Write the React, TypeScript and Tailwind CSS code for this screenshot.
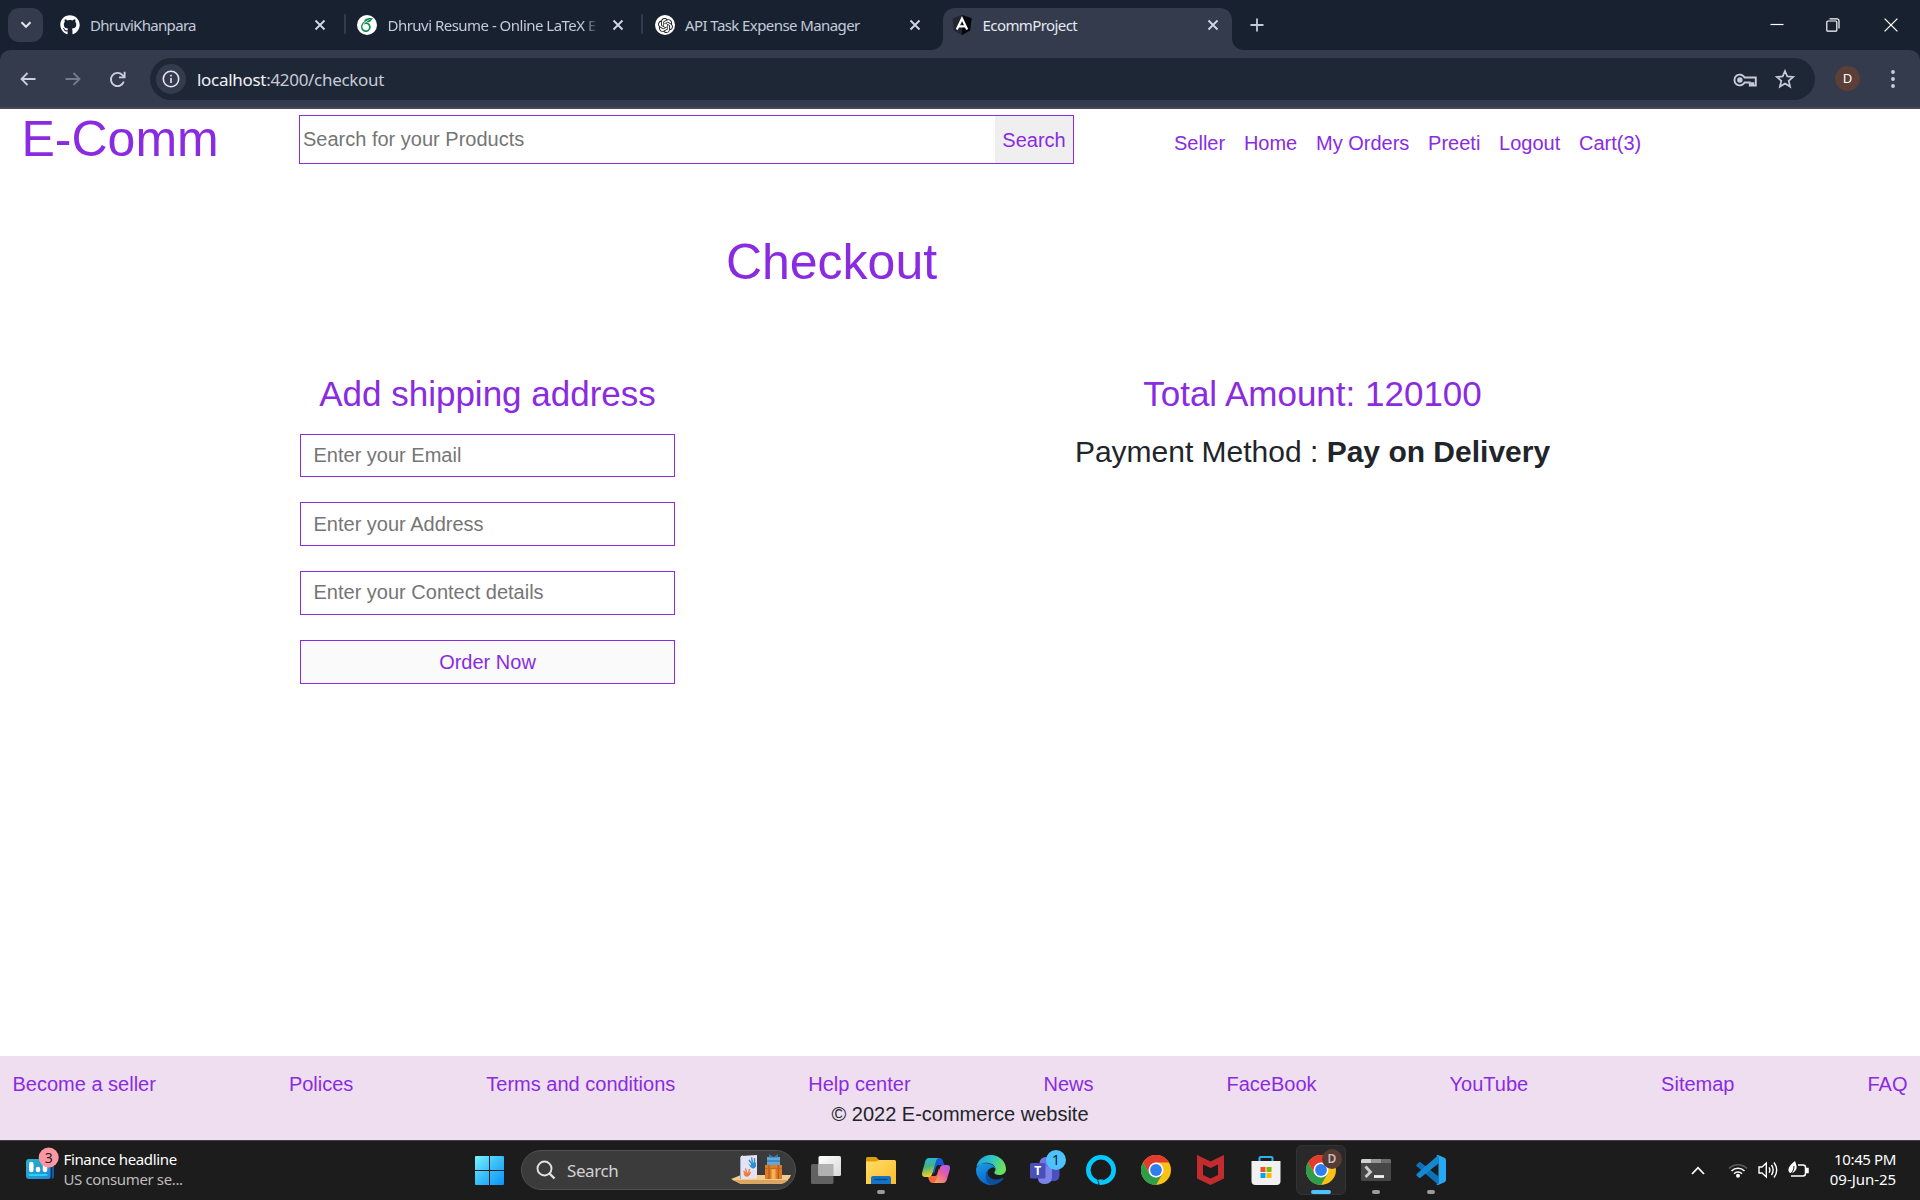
import React from "react";
import { FaGithub } from "react-icons/fa";
import { SiOpenai, SiOverleaf } from "react-icons/si";

function Close() {
  return (
    <svg width="12" height="12" viewBox="0 0 12 12" stroke="#d3d8e6" strokeWidth="1.8" fill="none">
      <path d="M1.5 1.5l9 9M10.5 1.5l-9 9" />
    </svg>
  );
}

function Tab({
  icon,
  title,
  active = false,
  separator = false,
  spacing = "",
  fade = false,
}: {
  icon: React.ReactNode;
  title: string;
  active?: boolean;
  separator?: boolean;
  spacing?: string;
  fade?: boolean;
}) {
  return (
    <div className="relative flex h-[50px] w-[297.5px] shrink-0 pt-2">
      {active && (
        <svg className="absolute top-0 -left-[12px]" width="320" height="50" viewBox="0 0 320 50">
          <path d="M0 50h2c7 0 12-5 12-12V20c0-7 5-12 12-12h265c7 0 12 5 12 12v18c0 7 5 12 12 12h2z" fill="#333b4c" />
        </svg>
      )}
      <div className="relative flex h-[34px] w-[291px] items-center pl-3">
        <span className="flex h-5 w-5 shrink-0 items-center justify-center">{icon}</span>
        <span
          className={
            "ml-[10px] w-[210px] shrink-0 whitespace-nowrap text-[15px] leading-[22px] " +
            spacing +
            (active ? " text-[#e6e9f2]" : " text-[#c3cadb]") +
            (fade ? " [mask-image:linear-gradient(to_right,black_93%,transparent_100%)]" : "")
          }
        >
          {title}
        </span>
        <span className="ml-[14px]">
          <Close />
        </span>
      </div>
      {separator && <span className="absolute right-0 top-[14px] h-5 w-[2px] rounded bg-[#333b4c]" />}
    </div>
  );
}

function BrowserChrome() {
  return (
    <div className="h-[109px] bg-[#182130] font-['Noto_Sans',sans-serif]">
      <div className="flex h-[50px] items-start">
        <div className="ml-2 mt-2 flex h-[34px] w-[35px] items-center justify-center rounded-[11px] bg-[#333b4c]">
          <svg width="12" height="8" viewBox="0 0 12 8" fill="none" stroke="#e3e6ef" strokeWidth="2">
            <path d="M1.5 1.2L6 5.8l4.5-4.6" />
          </svg>
        </div>
        <div className="ml-[5px] flex">
          <Tab separator icon={<FaGithub size={20} color="#fff" />} title="DhruviKhanpara" spacing="tracking-[-0.68px]" />
          <Tab
            separator
            fade
            icon={
              <span className="relative -left-px flex h-5 w-5 items-center justify-center rounded-full bg-white">
                <SiOverleaf size={14} color="#138a4c" />
              </span>
            }
            title="Dhruvi Resume - Online LaTeX E"
            spacing="tracking-[-0.52px]"
          />
          <Tab
            icon={
              <span className="flex h-5 w-5 items-center justify-center rounded-full bg-white">
                <SiOpenai size={15} color="#222" />
              </span>
            }
            title="API Task Expense Manager"
            spacing="tracking-[-0.58px]"
          />
          <Tab
            active
            icon={
              <svg className="relative -left-px" width="20" height="20" viewBox="0 0 20 20">
                <path d="M10 0l9.5 3.3-1.4 12.2L10 20l-8.1-4.5L.5 3.3z" fill="#22262f" />
                <path d="M10 0l9.5 3.3-1.4 12.2L10 20z" fill="#05070c" />
                <path d="M4.8 14.5L10 3.6l5.2 10.900M6.800 11.300h6.400" fill="none" stroke="#fff" strokeWidth="2.200" />
              </svg>
            }
            title="EcommProject"
            spacing="tracking-[-0.58px]"
          />
        </div>
        <svg className="ml-[12px] mt-[18px]" width="14" height="14" viewBox="0 0 14 14" stroke="#c3cadb" strokeWidth="1.8">
          <path d="M7 .5v13M.5 7h13" />
        </svg>
        <div className="ml-auto flex h-[50px] items-center pr-[22px]">
          <svg width="14" height="14" viewBox="0 0 14 14" stroke="#fff" strokeWidth="1.2">
            <path d="M.5 6.5h13" />
          </svg>
          <svg className="ml-[42px]" width="14" height="14" viewBox="0 0 14 14" stroke="#fff" strokeWidth="1.2" fill="none">
            <rect x=".8" y="3" width="10" height="10.2" rx="1" />
            <path d="M3.5 .9h7.500q2 0 2 2v7.600" />
          </svg>
          <svg className="ml-[44px]" width="14" height="14" viewBox="0 0 14 14" stroke="#fff" strokeWidth="1.3">
            <path d="M.6 .6l12.8 12.8M13.4 .6L.6 13.4" />
          </svg>
        </div>
      </div>
      <div className="flex h-[59px] items-start rounded-t-[10px] border-b-2 border-[#4b4652] bg-[#333b4c] pt-2">
        <div className="ml-5 flex h-[42px] w-[130px] items-center">
          <svg width="16" height="14" viewBox="0 0 16 14" fill="none" stroke="#c9cfde" strokeWidth="1.8">
            <path d="M15.5 7H1.5M7.5 1L1.5 7l6 6" />
          </svg>
          <svg className="ml-[29px]" width="16" height="14" viewBox="0 0 16 14" fill="none" stroke="#747b8a" strokeWidth="1.8">
            <path d="M.5 7h14M8.5 1l6 6-6 6" />
          </svg>
          <svg className="ml-[28px]" width="17" height="17" viewBox="0 0 17 17" fill="none" stroke="#c9cfde" strokeWidth="1.9">
            <path d="M14.8 10.5A6.6 6.6 0 1 1 13.3 3.9L15 5.6" />
            <path d="M15.6 .8v5.600h-5.600" />
          </svg>
        </div>
        <div className="flex h-[42px] w-[1665px] items-center rounded-full bg-[#1e2736] pl-[6px]">
          <span className="flex h-[30px] w-[30px] items-center justify-center rounded-full bg-[#333b4c]">
            <svg width="18" height="18" viewBox="0 0 18 18" fill="none" stroke="#e3e6ef" strokeWidth="1.6">
              <circle cx="9" cy="9" r="7.7" />
              <path d="M9 8v5M9 4.8v1.800" />
            </svg>
          </span>
          <span className="ml-[11px] mt-[2px] text-[17px] leading-6 tracking-[-0.3px] text-[#c6cbd6]">
            <span className="text-[#f0f2f7]">localhost</span>:4200/checkout
          </span>
          <svg className="ml-auto mt-[2px]" width="24" height="14" viewBox="0 0 24 14" fill="none" stroke="#c6cbd6" strokeWidth="1.9">
            <path d="M11.6 4.5A5.4 5.4 0 1 0 11.6 9.5h5.200v3h2v-2.200h1.500v2.200h2.500v-8z" />
            <circle cx="6.9" cy="7" r="1.800" fill="#c6cbd6" />
          </svg>
          <svg className="ml-[18px] mr-[20px]" width="20" height="20" viewBox="0 0 20 20" fill="none" stroke="#c6cbd6" strokeWidth="1.700">
            <path d="M10 2l2.300 5.400 5.900.5-4.500 3.900 1.400 5.800L10 14.500l-5.100 3.100 1.400-5.800-4.500-3.900 5.900-.5z" />
          </svg>
        </div>
        <span className="ml-[20px] mt-[8px] flex h-[25px] w-[25px] items-center justify-center rounded-full bg-[#5c4037] text-[13px] text-white">
          D
        </span>
        <svg className="ml-[31px] mt-[12px]" width="4" height="18" viewBox="0 0 4 18" fill="#c9cfde">
          <circle cx="2" cy="2" r="1.900" />
          <circle cx="2" cy="9" r="1.900" />
          <circle cx="2" cy="16" r="1.900" />
        </svg>
      </div>
    </div>
  );
}

const navLinks = ["Seller", "Home", "My Orders", "Preeti", "Logout", "Cart(3)"];
const fields = ["Enter your Email", "Enter your Address", "Enter your Contect details"];
const footerLinks = [
  "Become a seller",
  "Polices",
  "Terms and conditions",
  "Help center",
  "News",
  "FaceBook",
  "YouTube",
  "Sitemap",
  "FAQ",
];

function Store() {
  return (
    <div className="flex h-[1031px] flex-col bg-white font-['Liberation_Sans',Arial,sans-serif] text-xl leading-[30px] text-[#212529]">
      <header className="flex h-[60px] items-start text-[#8a2be2]">
        <h1 className="ml-[21.5px] w-[277.5px] text-[50px] leading-[60px]">E-Comm</h1>
        <div className="mt-[6px] flex h-[49px] w-[775px] border border-[#8a2be2]">
          <input
            className="min-w-0 flex-1 pb-[1px] pl-[3px] outline-none placeholder:text-[#757575]"
            placeholder="Search for your Products"
          />
          <button className="w-[78px] bg-[#efefef]">Search</button>
        </div>
        <nav className="ml-[100px] mt-[19px] flex gap-[18.75px]">
          {navLinks.map((l) => (
            <a key={l}>{l}</a>
          ))}
        </nav>
      </header>
      <main className="w-[1664px] flex-1">
        <h1 className="-ml-px mt-[63px] text-center text-[50px] leading-[60px] text-[#8a2be2]">Checkout</h1>
        <div className="mt-[81px] flex">
          <section className="ml-[300px] w-[375px]">
            <h3 className="text-center text-[35px] leading-[42px] text-[#8a2be2]">Add shipping address</h3>
            <form className="mt-[18.5px] flex flex-col gap-[25px]">
              {fields.map((f) => (
                <input
                  key={f}
                  placeholder={f}
                  className="h-[43.75px] border border-[#8a2be2] px-[12.5px] outline-none placeholder:text-[#757575]"
                />
              ))}
              <button type="button" className="h-[43.75px] border border-[#8a2be2] bg-[#fafafa] text-[#8a2be2]">
                Order Now
              </button>
            </form>
          </section>
          <section className="ml-[387.5px] w-[500px] text-center">
            <h3 className="text-[35px] leading-[42px] text-[#8a2be2]">Total Amount: 120100</h3>
            <h4 className="mt-[19px] text-[30px] leading-9">
              Payment Method : <b>Pay on Delivery</b>
            </h4>
          </section>
        </div>
      </main>
      <footer className="h-[84px] bg-[#efdef0] px-[12.5px] pt-[13px]">
        <div className="flex justify-between text-[#8a2be2]">
          {footerLinks.map((l) => (
            <a key={l}>{l}</a>
          ))}
        </div>
        <p className="text-center">© 2022 E-commerce website</p>
      </footer>
    </div>
  );
}

function ChromeLogo() {
  return (
    <svg width="30" height="30" viewBox="0 0 30 30">
      <circle cx="15" cy="15" r="15" fill="#fbc116" />
      <path d="M15 7.500H28A15 15 0 0 0 2 7.500L8.500 18.800z" fill="#e33b2e" />
      <path d="M2 7.500A15 15 0 0 0 15 30L21.500 18.700L15 22.500L8.500 18.700z" fill="#2f9e4a" />
      <circle cx="15" cy="15" r="7.500" fill="#fff" />
      <circle cx="15" cy="15" r="5.900" fill="#2f7df0" />
    </svg>
  );
}

function AppCell({ children, running = false }: { children: React.ReactNode; running?: boolean }) {
  return (
    <div className="relative flex h-[50px] w-[55px] shrink-0 items-center justify-center">
      {children}
      {running && <span className="absolute bottom-[1px] left-[23.5px] h-1 w-2 rounded-full bg-[#9a9a9a]" />}
    </div>
  );
}

function Taskbar() {
  return (
    <div className="flex h-[60px] items-start border-t border-[#434146] bg-[#1c1c1c] pt-1 font-['Noto_Sans',sans-serif] text-white">
      <div className="flex h-[50px] w-[475px] items-start">
        <svg className="ml-[26px] mt-[2px]" width="34" height="33" viewBox="0 0 34 33">
          <defs>
            <linearGradient id="fin" x2="1" y2="1">
              <stop stopColor="#21b4c6" />
              <stop offset="1" stopColor="#2a87dc" />
            </linearGradient>
          </defs>
          <rect x="8" y="13" width="20" height="19" rx="3" fill="#155aa8" />
          <path d="M25 18v14" stroke="#10223b" strokeWidth="1.5" />
          <rect x="0" y="12" width="24.5" height="20" rx="3" fill="url(#fin)" />
          <path d="M5.300 17v6M12 22v1M19 18v5" stroke="#fff" strokeWidth="4.5" strokeLinecap="round" />
          <path d="M3.500 28h17" stroke="#20d4f5" strokeWidth="2" strokeLinecap="round" />
          <circle cx="22.700" cy="10.500" r="10" fill="#fd97a2" />
          <text x="22.700" y="15.500" textAnchor="middle" fontSize="14" fill="#222">3</text>
        </svg>
        <div className="ml-[3.500px] mt-[4px] text-[15px] leading-5 tracking-[-0.36px]">
          <div>Finance headline</div>
          <div className="text-[#bdbdbd]">US consumer se...</div>
        </div>
      </div>
      <svg className="mt-[11px]" width="29" height="29" viewBox="0 0 29 29">
        <defs>
          <linearGradient id="win" x2="1" y2="1">
            <stop stopColor="#7af3ff" />
            <stop offset=".5" stopColor="#38bdf8" />
            <stop offset="1" stopColor="#0c93f8" />
          </linearGradient>
        </defs>
        <path d="M1 0h13v14H0V1q0-1 1-1zM15 0h13q1 0 1 1v13H15zM0 15h14v14H1q-1 0-1-1zM15 15h14v13q0 1-1 1H15z" fill="url(#win)" />
      </svg>
      <div className="ml-[17px] mt-[5px] flex h-10 w-[275px] items-center rounded-full border border-[#505050] bg-[#3b3b3b] pl-[14px]">
        <svg width="20" height="20" viewBox="0 0 20 20" fill="none" stroke="#e2e2e2">
          <circle cx="8.500" cy="8.500" r="7" strokeWidth="1.900" />
          <path d="M13.500 13.500l5 5" strokeWidth="2.400" />
        </svg>
        <span className="ml-[11px] mt-[2px] text-[17px] leading-6 tracking-[-0.4px] text-[#d2d2d2]">Search</span>
        <svg className="ml-auto mr-[4px]" width="60" height="34" viewBox="0 0 60 34">
          <path d="M0 26L10 22H60Q58 28 50 31H10Z" fill="#f1cc8e" />
          <path d="M1.500 27h56q-3 3-7.500 4H10z" fill="#dba662" />
          <path d="M9 4l3-2v24H9z" fill="#9fa6cf" />
          <path d="M10 3l16-1v23.500L10 26z" fill="#e4e2f3" />
          <path d="M18 7l2.500 3.500M20.500 4.500l1 5M23.500 5v5" stroke="#318fcc" strokeWidth="1.300" />
          <path d="M17 10.500l3 2v-3h5v4q-2 3.500-5 1z" fill="#318fcc" />
          <path d="M12.500 18l2 2M14.500 15.500l1 4M18.500 16l-1 4" stroke="#f07b3c" strokeWidth="1.300" />
          <path d="M12.500 20.500l2-1h3l2.500-.8q-1 5-4.500 5-2.500-.5-3-3.200z" fill="#f07b3c" />
          <rect x="36" y="4" width="13" height="9" fill="#63a9d7" />
          <path d="M38 1l4.500 3L47 1v3.500h-9z" fill="#3576b0" />
          <path d="M36 8h13" stroke="#3c7fb5" strokeWidth="1.500" />
          <rect x="34" y="12" width="17" height="14" fill="#e17a24" />
          <path d="M42.500 16v10" stroke="#f6b254" strokeWidth="4" />
          <path d="M38 12v14M47.500 12v14" stroke="#b05a26" strokeWidth="1.200" />
          <path d="M34 15.500h17" stroke="#c9661d" strokeWidth="1.200" />
        </svg>
      </div>
      <div className="ml-[2.5px] flex">
        <AppCell>
          <svg width="30" height="28" viewBox="0 0 30 28">
            <defs>
              <linearGradient id="tv" x2="1" y2="1">
                <stop stopColor="#fff" />
                <stop offset="1" stopColor="#d8d8d8" />
              </linearGradient>
            </defs>
            <rect x="0" y="8" width="22.500" height="20" rx="1.500" fill="#626262" />
            <rect x="7.500" y="0" width="22.500" height="20" rx="1.500" fill="url(#tv)" />
            <path d="M7.500 8H22.500V20H7.500z" fill="#b1b1b1" />
          </svg>
        </AppCell>
        <AppCell running>
          <svg width="30" height="27" viewBox="0 0 30 27">
            <defs>
              <linearGradient id="fo" x2="1" y2="1">
                <stop stopColor="#ffdc68" />
                <stop offset="1" stopColor="#fbbd2c" />
              </linearGradient>
            </defs>
            <path d="M0 1.500Q0 0 1.500 0H10l3 3v5H0z" fill="#dd9d06" />
            <path d="M0 4.500h10l3-1.500h15.500q1.500 0 1.500 1.500V27H0z" fill="url(#fo)" />
            <path d="M5 27v-6q0-2 2-2h16q2 0 2 2v6z" fill="#1273c8" />
            <path d="M8.500 22.500h13" stroke="#0a4383" strokeWidth="1.300" />
          </svg>
        </AppCell>
        <AppCell>
          <svg width="28" height="25" viewBox="0 0 28 25">
            <defs>
              <linearGradient id="c1" x2=".2" y2="1">
                <stop stopColor="#22b8f3" />
                <stop offset=".5" stopColor="#45b17d" />
                <stop offset="1" stopColor="#f2d125" />
              </linearGradient>
              <linearGradient id="c2" x1="1" x2=".2" y2="1">
                <stop stopColor="#a45cf4" />
                <stop offset=".5" stopColor="#e65ca6" />
                <stop offset="1" stopColor="#ffa157" />
              </linearGradient>
            </defs>
            <path d="M7 0h11q2 0 3 3l1.200 4H17q-2 0-3 2l-2 8z" fill="#1857d3" />
            <path d="M21 25H10q-2 0-3-3l-1.200-4H11q2 0 3-2l2-8z" fill="#f5693c" />
            <path d="M7 0H17q-2 0-3 3l-3.500 12q-1 4-4 4H3q-4 0-2.700-5L3 4q1-4 4-4z" fill="url(#c1)" />
            <path d="M21 25H11q2 0 3-3l3.500-11q1-4 4-4H25q4 0 2.700 5L25 21q-1 4-4 4z" fill="url(#c2)" />
            <path d="M14.500 8.500q.8-1.500 2.500-1.500h2q-1.500 1-2 3l-2 6.500q-.7 1.500-2.500 1.500h-2q1.500-1 2-3z" fill="#1c1c1c" />
          </svg>
        </AppCell>
        <AppCell>
          <svg width="30" height="30" viewBox="0 0 30 30">
            <defs>
              <linearGradient id="e1" x2="1" y2=".3">
                <stop stopColor="#1c9de4" />
                <stop offset=".55" stopColor="#2ec5c5" />
                <stop offset="1" stopColor="#6be05a" />
              </linearGradient>
              <linearGradient id="e2" x2=".4" y2="1">
                <stop stopColor="#1b9de8" />
                <stop offset="1" stopColor="#0a66c8" />
              </linearGradient>
            </defs>
            <path d="M.3 12A15 15 0 0 1 30 14c0 4-3 6-7 6-3.500 0-5.500-1.500-4.500-3 .8-1.200 1-2 1-3C19 9 13 7 8 8 4 9 1.500 11 .3 12z" fill="url(#e1)" />
            <path d="M.2 13C3 8 8 8 11 8.200c5 .3 8 3 8.300 5.300C17 11 11 14 11 19c0 6 4 10.500 7 10.700A15 15 0 0 1 .2 13z" fill="url(#e2)" />
            <path d="M12 14.500c-2 6 3 10 8 10 4 0 6-1.500 7-1.700 1 0 .7 1-.3 2C24 28 19 30.500 15 29.800 9 28 8 19 12 14.500z" fill="#0c4f9c" />
          </svg>
        </AppCell>
        <AppCell>
          <svg width="38" height="38" viewBox="0 0 38 38" className="relative -top-[2px] left-[1px]">
            <circle cx="17.500" cy="14" r="6" fill="#7277dd" />
            <path d="M22 19h8.500q1 0 1 1v6q0 6-6 6h-4z" fill="#4a50bd" />
            <path d="M10 18h14v10q0 7-7 7t-7-6z" fill="#7b83eb" />
            <rect x="2" y="14" width="15.500" height="15.500" rx="1.500" fill="#4950b8" />
            <text x="9.700" y="26" fontSize="12" fontWeight="700" fill="#fff" textAnchor="middle">T</text>
            <circle cx="28" cy="11" r="10" fill="#4cc2ff" />
            <text x="28" y="16" fontSize="14" fill="#17212a" textAnchor="middle">1</text>
          </svg>
        </AppCell>
        <AppCell>
          <svg width="30" height="30" viewBox="0 0 30 30" fill="none">
            <circle cx="15" cy="15" r="12.700" stroke="#05c8ff" strokeWidth="4.600" />
            <path d="M11.500 25.500q1.500 1 1.300 4.500" stroke="#1c1c1c" strokeWidth="1" />
            <path d="M12.500 24.500h5l-4 3z" fill="#05c8ff" />
          </svg>
        </AppCell>
        <AppCell>
          <ChromeLogo />
        </AppCell>
        <AppCell>
          <svg className="relative -left-px" width="27" height="30" viewBox="0 0 27 30">
            <path d="M0 0L13.500 6.500 27 0V23.500L13.500 30 0 23.500zM6 9.500V20l7.500 3.600L21 20V9.500L13.500 13z" fill="#c32c2e" fillRule="evenodd" />
          </svg>
        </AppCell>
        <AppCell>
          <svg width="30" height="29" viewBox="0 0 30 29">
            <path d="M8.500 6V2q0-1 1-1h11q1 0 1 1v4" fill="none" stroke="#2bb1ec" strokeWidth="2" />
            <path d="M.5 5h29v20q0 4-4 4h-21q-4 0-4-4z" fill="#f1f1f1" />
            <path d="M9.500 11h5v5h-5z" fill="#f25022" />
            <path d="M15.500 11h5v5h-5z" fill="#7fba00" />
            <path d="M9.500 17h5v5h-5z" fill="#00a4ef" />
            <path d="M15.500 17h5v5h-5z" fill="#ffb900" />
          </svg>
        </AppCell>
        <div className="relative mx-[2.5px] flex h-[50px] w-[50px] items-center justify-center rounded-md border border-[#333] bg-[#292929]">
          <ChromeLogo />
          <span className="absolute left-[25px] top-[3px] flex h-5 w-5 items-center justify-center rounded-full bg-[#563c34] text-[12px] font-semibold leading-none text-[#cbbdb8]">
            D
          </span>
          <span className="absolute bottom-0 left-[14px] h-1 w-5 rounded-full bg-[#4cc2ff]" />
        </div>
        <AppCell running>
          <svg width="30" height="22" viewBox="0 0 30 22">
            <rect width="30" height="22" rx="1.500" fill="#474747" />
            <path d="M0 4V1.500Q0 0 1.500 0H10.500V4z" fill="#d0d0d0" />
            <path d="M10.500 0H20v4h-9.500z" fill="#989898" />
            <path d="M20 0h8.500Q30 0 30 1.500V4H20z" fill="#6c6c6c" />
            <path d="M4.500 7.500l5 5.500-5 5" fill="none" stroke="#ccc" strokeWidth="2.800" />
            <path d="M13 17.500h10" stroke="#f2f2f2" strokeWidth="2.800" />
          </svg>
        </AppCell>
        <AppCell running>
          <svg width="30" height="30" viewBox="0 0 30 30">
            <path d="M.6 9.500l2.400-2.300q.8-.4 1.500 0L22.500 21.500V30L.8 11.300q-.6-.9-.2-1.800z" fill="#0b72b8" />
            <path d="M.6 20.500l2.400 2.300q.8.4 1.500 0L22.500 8.500V0L.8 18.700q-.6.9-.2 1.800z" fill="#1488d0" />
            <path d="M22 0l6.500 2.800Q30 3.500 30 5v20q0 1.500-1.500 2.200L22 30q-1.200 0-2-1.200 2.500 1 2.500-1.300V2.500Q22.500.2 20 1.200 20.800 0 22 0z" fill="#27a8f2" />
          </svg>
        </AppCell>
      </div>
      <div className="ml-auto flex h-[50px] items-center pr-6">
        <svg width="14" height="9" viewBox="0 0 14 9" fill="none" stroke="#fff" strokeWidth="1.800">
          <path d="M1 8l6-6.300L13 8" />
        </svg>
        <svg className="ml-[23px]" width="20" height="16" viewBox="0 0 20 16" fill="none" strokeWidth="1.600">
          <path d="M1 6.500a12.700 12.700 0 0 1 18 0" stroke="#5c5c5c" />
          <path d="M3.500 9a9.200 9.200 0 0 1 13 0M6 11.700a5.700 5.700 0 0 1 8 0" stroke="#fff" />
          <circle cx="10" cy="13.800" r="2" fill="#fff" />
        </svg>
        <svg className="ml-[10px]" width="20" height="18" viewBox="0 0 20 18" fill="none" stroke="#fff" strokeWidth="1.400">
          <path d="M1 6h3l4.300-4v14L4 12H1z" />
          <path d="M11 6.300q1.800 2.700 0 5.400M13.500 4q3.300 5 0 10M16 1.500q5.400 7.500 0 15" />
        </svg>
        <svg className="ml-[10px]" width="21" height="18" viewBox="0 0 21 18" fill="none" stroke="#fff" strokeWidth="1.500">
          <path d="M10 4h5q2.500 0 2.500 2.500v6Q17.500 15 15 15H3" />
          <path d="M18 7.500h2v4h-2" fill="#fff" />
          <path d="M7 0q3 7 .5 9.500Q6 12 2.500 12 0 11 .5 8 1 4.500 7 0z" fill="#fff" stroke="none" />
          <path d="M6 5q0 6-5 9" stroke="#1c1c1c" strokeWidth="1" />
        </svg>
        <div className="-mt-[2px] ml-[18px] w-[69px] text-right text-[15px] leading-5 whitespace-nowrap">
          <div className="tracking-[-0.38px]">10:45 PM</div>
          <div className="tracking-[-0.05px]">09-Jun-25</div>
        </div>
      </div>
    </div>
  );
}

export default function App() {
  return (
    <div className="h-[1200px] w-[1920px] overflow-hidden">
      <BrowserChrome />
      <Store />
      <Taskbar />
    </div>
  );
}
